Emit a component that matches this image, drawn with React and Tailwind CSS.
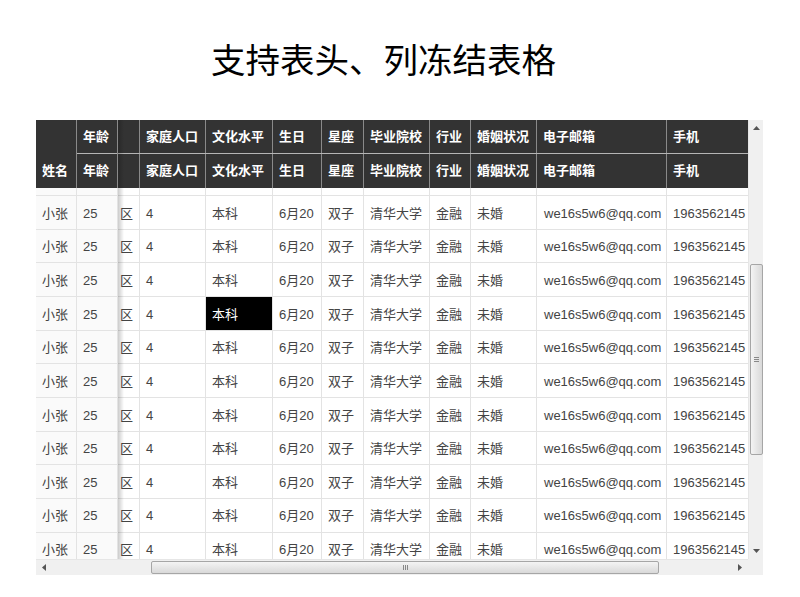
import React from "react";

const cols = [
  { w: "w-[22px]", head: "", val: "区", pad: "pl-[2px]" },
  { w: "w-[66px]", head: "家庭人口", val: "4", pad: "pl-[6px]" },
  { w: "w-[67px]", head: "文化水平", val: "本科", pad: "pl-[6px]" },
  { w: "w-[49px]", head: "生日", val: "6月20", pad: "pl-[6px]" },
  { w: "w-[42px]", head: "星座", val: "双子", pad: "pl-[6px]" },
  { w: "w-[66px]", head: "毕业院校", val: "清华大学", pad: "pl-[6px]" },
  { w: "w-[41px]", head: "行业", val: "金融", pad: "pl-[6px]" },
  { w: "w-[66px]", head: "婚姻状况", val: "未婚", pad: "pl-[6px]" },
  { w: "w-[130px]", head: "电子邮箱", val: "we16s5w6@qq.com", pad: "pl-[7px]" },
  { w: "w-[100px]", head: "手机", val: "1963562145", pad: "pl-[6px]" },
];

const rows = Array.from({ length: 11 }, (_, i) => i);

function HeadCell({ w, children }) {
  return (
    <div className={`${w} shrink-0 flex items-center pl-[6px] border-r border-[#8a8a8a] font-bold text-white`}>
      {children}
    </div>
  );
}

function ArrowV({ up }) {
  return (
    <svg width="7" height="4" viewBox="0 0 7 4" className="block">
      {up ? <path d="M0 4 L3.5 0 L7 4 Z" fill="#555" /> : <path d="M0 0 L3.5 4 L7 0 Z" fill="#555" />}
    </svg>
  );
}

function ArrowH({ left }) {
  return (
    <svg width="4" height="7" viewBox="0 0 4 7" className="block">
      {left ? <path d="M4 0 L0 3.5 L4 7 Z" fill="#555" /> : <path d="M0 0 L4 3.5 L0 7 Z" fill="#555" />}
    </svg>
  );
}

export default function App() {
  return (
    <div className="min-h-screen bg-white font-['Liberation_Sans','Noto_Sans_CJK_SC',sans-serif] text-[13px]">
      <h1 className="pt-[44px] pl-[211px] text-[34.5px] leading-[35px] font-normal text-black">
        支持表头、列冻结表格
      </h1>

      <div className="ml-[36px] mt-[41px] w-[727px] h-[455px] flex flex-col">
        <div className="flex h-[439px] shrink-0">
          {/* table area */}
          <div className="relative w-[712px] h-[439px] overflow-hidden flex">
            {/* frozen columns */}
            <div className="w-[82px] shrink-0 flex flex-col">
              <div className="h-[68px] shrink-0 flex bg-[#333]">
                <div className="w-[41px] flex flex-col border-r border-[#8a8a8a]">
                  <div className="h-[34px] shrink-0" />
                  <div className="h-[34px] shrink-0 flex items-center pl-[6px] font-bold text-white">姓名</div>
                </div>
                <div className="w-[41px] flex flex-col border-r border-[#8a8a8a]">
                  <div className="h-[34px] shrink-0 flex items-center pl-[6px] font-bold text-white border-b border-[#b5b5b5]">年龄</div>
                  <div className="h-[34px] shrink-0 flex items-center pl-[6px] font-bold text-white">年龄</div>
                </div>
              </div>
              <div className="h-[8px] shrink-0 flex border-b border-[#e3e3e3] bg-[#fafafa]">
                <div className="w-[41px] border-r border-[#e3e3e3]" />
                <div className="w-[41px] border-r border-[#e3e3e3]" />
              </div>
              {rows.map((r) => (
                <div key={r} className="h-[33.67px] shrink-0 flex border-b border-[#e3e3e3] bg-[#fafafa] text-[#444]">
                  <div className="w-[41px] flex items-center pl-[6px] pt-[2px] border-r border-[#e3e3e3]">小张</div>
                  <div className="w-[41px] flex items-center pl-[6px] pt-[2px] border-r border-[#e3e3e3]">25</div>
                </div>
              ))}
            </div>

            {/* scrolling columns */}
            <div className="relative flex-1 overflow-hidden flex flex-col">
              <div className="h-[68px] shrink-0 flex flex-col bg-[#333] w-max">
                <div className="h-[34px] shrink-0 flex border-b border-[#b5b5b5]">
                  {cols.map((c, i) => (
                    <HeadCell key={i} w={c.w}>{c.head}</HeadCell>
                  ))}
                </div>
                <div className="h-[34px] shrink-0 flex">
                  {cols.map((c, i) => (
                    <HeadCell key={i} w={c.w}>{c.head}</HeadCell>
                  ))}
                </div>
              </div>
              <div className="h-[8px] shrink-0 flex border-b border-[#e3e3e3] w-max">
                {cols.map((c, i) => (
                  <div key={i} className={`${c.w} shrink-0 border-r border-[#e3e3e3]`} />
                ))}
              </div>
              {rows.map((r) => (
                <div key={r} className="h-[33.67px] shrink-0 flex border-b border-[#e3e3e3] w-max text-[#444]">
                  {cols.map((c, i) => {
                    const hl = r === 3 && i === 2;
                    return (
                      <div
                        key={i}
                        className={`${c.w} shrink-0 flex items-center ${c.pad} pt-[2px] border-r border-[#e3e3e3] whitespace-nowrap ${hl ? "bg-black text-white" : "bg-white"}`}
                      >
                        {c.val}
                      </div>
                    );
                  })}
                </div>
              ))}
              {/* frozen shadow */}
              <div className="absolute left-0 top-0 w-[6px] h-full bg-gradient-to-r from-black/20 to-transparent" />
            </div>
          </div>

          {/* vertical scrollbar */}
          <div className="w-[15px] h-[439px] bg-[#f0f0f0] border-l border-[#e6e6e6] flex flex-col items-center">
            <div className="h-[16px] shrink-0 flex items-center justify-center">
              <ArrowV up />
            </div>
            <div className="h-[128px] shrink-0" />
            <div className="w-[13px] h-[191px] shrink-0 rounded-[2px] border border-[#a6a6a6] bg-gradient-to-r from-[#f4f4f4] to-[#d9d9d9] flex flex-col items-center justify-center gap-[1px]">
              <div className="w-[5px] h-px bg-[#888]" />
              <div className="w-[5px] h-px bg-[#888]" />
              <div className="w-[5px] h-px bg-[#888]" />
            </div>
            <div className="flex-1" />
            <div className="h-[16px] shrink-0 flex items-center justify-center">
              <ArrowV />
            </div>
          </div>
        </div>

        {/* horizontal scrollbar */}
        <div className="flex h-[16px] shrink-0">
          <div className="w-[712px] h-[16px] bg-[#f0f0f0] border-t border-[#e6e6e6] flex items-center">
            <div className="w-[16px] flex items-center justify-center">
              <ArrowH left />
            </div>
            <div className="w-[99px]" />
            <div className="w-[508px] h-[13px] rounded-[2px] border border-[#a6a6a6] bg-gradient-to-b from-[#f4f4f4] to-[#d9d9d9] flex items-center justify-center gap-[1px]">
              <div className="w-px h-[5px] bg-[#888]" />
              <div className="w-px h-[5px] bg-[#888]" />
              <div className="w-px h-[5px] bg-[#888]" />
            </div>
            <div className="flex-1" />
            <div className="w-[16px] flex items-center justify-center">
              <ArrowH />
            </div>
          </div>
          <div className="w-[15px] h-[16px] bg-[#f0f0f0]" />
        </div>
      </div>
    </div>
  );
}
